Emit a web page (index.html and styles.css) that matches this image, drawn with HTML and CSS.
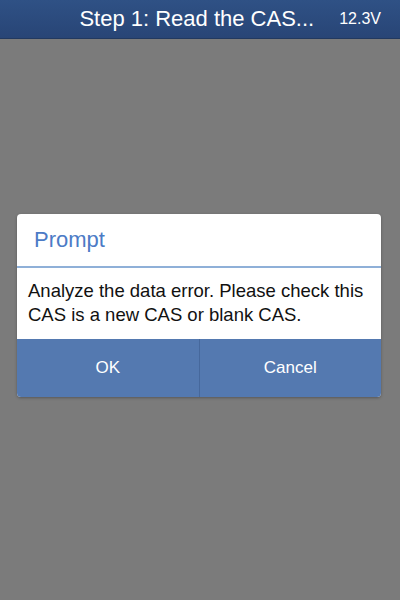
FILE: index.html
```html
<!DOCTYPE html>
<html lang="en">
<head>
    <meta charset="UTF-8">
    <meta name="viewport" content="width=device-width, initial-scale=1.0">
    <title>Step 1: Read the CAS</title>
    <link rel="stylesheet" href="styles.css">
</head>
<body>

    <div class="top-bar">
        <span class="title">Step 1: Read the CAS...</span>
        <span class="voltage">12.3V</span>
    </div>

    <div class="screen">
        <div class="dialog">
            <div class="dialog-head">Prompt</div>
            <div class="dialog-body">
                Analyze the data error. Please check this CAS is a new CAS or blank CAS.
            </div>
            <div class="dialog-buttons">
                <button class="btn">OK</button>
                <button class="btn">Cancel</button>
            </div>
        </div>
    </div>

</body>
</html>
```

FILE: styles.css
```css
* {
    box-sizing: border-box;
    margin: 0;
    padding: 0;
}
html, body {
    height: 100%;
}
body {
    font-family: "Liberation Sans", Arial, sans-serif;
    background-color: #7b7b7b;
    display: flex;
    flex-direction: column;
}

.top-bar {
    height: 39px;
    background: linear-gradient(#2f5185, #284576);
    border-bottom: 1px solid #22395f;
    display: flex;
    align-items: center;
    justify-content: flex-end;
    padding-right: 19px;
    color: #fff;
}
.top-bar .title {
    font-size: 22px;
    margin-right: 25px;
}
.top-bar .voltage {
    font-size: 16px;
}

.screen {
    flex: 1;
    display: flex;
    justify-content: center;
    padding-top: 175px;
    padding-left: 17px;
    padding-right: 19px;
}
.dialog {
    width: 100%;
    height: 183px;
    background-color: #fff;
    border-radius: 4px;
    overflow: hidden;
    display: flex;
    flex-direction: column;
    box-shadow: 0 1px 3px rgba(0, 0, 0, 0.3);
}
.dialog-head {
    height: 54px;
    padding: 13px 0 0 17px;
    font-size: 22px;
    color: #4c7bc6;
    border-bottom: 2px solid #8fb0d8;
}
.dialog-body {
    height: 71px;
    padding: 11px 10px 0 11px;
    font-size: 18.5px;
    line-height: 24px;
    color: #111;
}
.dialog-buttons {
    flex: 1;
    display: flex;
    background-color: #5479b0;
}
.btn {
    flex: 1;
    border: none;
    background: none;
    color: #fff;
    font-family: inherit;
    font-size: 17px;
}
.btn + .btn {
    border-left: 1px solid #46689c;
}
```
